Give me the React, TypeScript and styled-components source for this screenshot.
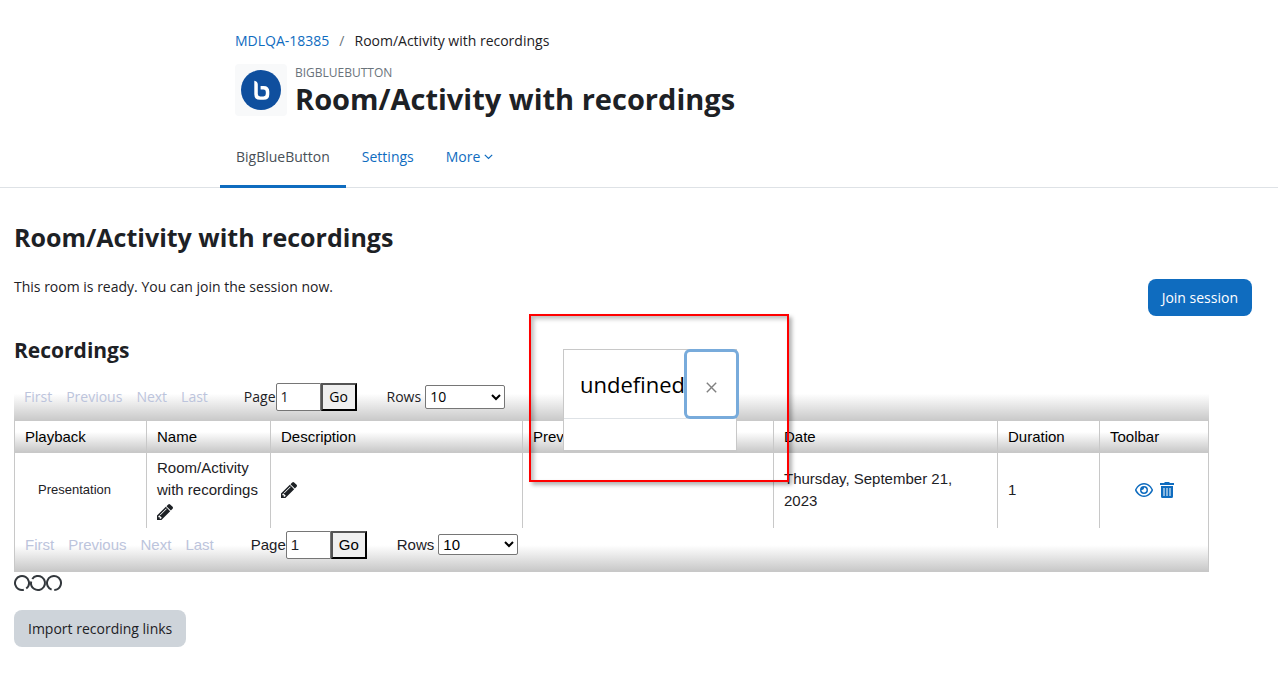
import React from 'react';
import styled, { createGlobalStyle, css } from 'styled-components';
import { FaRegEye } from 'react-icons/fa6';

const GlobalStyle = createGlobalStyle`
  * { box-sizing: border-box; }
  body {
    margin: 0;
    background: #fff;
    color: #1d2125;
    font: 14px/22px "Open Sans", "Noto Sans", sans-serif;
  }
  a { color: #0f6cbf; text-decoration: none; }
  h1, h2, h3, p { margin: 0; }
`;

const PageHeader = styled.header`
  border-bottom: 1px solid #dee2e6;
`;

const HeaderInner = styled.div`
  max-width: 838px;
  margin: 0 auto;
  padding-top: 30px;
`;

const Breadcrumb = styled.nav`
  display: flex;
  gap: 10px;
  padding: 0 15px;
  span { color: #6a737b; }
`;

const TitleRow = styled.div`
  display: flex;
  gap: 8px;
  padding: 12px 15px 0;
`;

const ActivityIcon = styled.div`
  display: flex;
  align-items: center;
  justify-content: center;
  width: 52px;
  height: 52px;
  border-radius: 4px;
  background: #f8f9fa;
`;

const ActivityType = styled.div`
  color: #6a737b;
  font-size: 12px;
  line-height: 18px;
  text-transform: uppercase;
`;

const PageTitle = styled.h1`
  font-size: 29px;
  line-height: 34px;
`;

const Tabs = styled.nav`
  display: flex;
  margin: 12px 0 -1px;
`;

const Tab = styled.a<{ $active?: boolean }>`
  display: flex;
  align-items: center;
  gap: 4px;
  height: 60px;
  padding: 0 16px;
  border-bottom: 3px solid transparent;
  ${(p) => p.$active && css`
    color: #495057;
    border-color: #0f6cbf;
  `}
`;

const Main = styled.main`
  padding: 31px 26px 36px 14px;
`;

const SectionTitle = styled.h2`
  font-size: 25px;
  line-height: 36px;
`;

const StatusRow = styled.div`
  display: flex;
  justify-content: space-between;
  align-items: flex-start;
  margin-top: 24px;
`;

const Status = styled.p`
  line-height: 16px;
`;

const Button = styled.button<{ $primary?: boolean }>`
  height: 37px;
  padding: 0 14px;
  border: 0;
  border-radius: 8px;
  font: inherit;
  color: ${(p) => (p.$primary ? '#fff' : '#1d2125')};
  background: ${(p) => (p.$primary ? '#0f6cbf' : '#ced4da')};
`;

const Recordings = styled.section`
  position: relative;
  margin: 20px 43px 0 0;
`;

const RecordingsTitle = styled.h3`
  margin-bottom: 18px;
  font-size: 21px;
  line-height: 28px;
`;

const Paginator = styled.div<{ $bottom?: boolean }>`
  display: flex;
  align-items: center;
  height: ${(p) => (p.$bottom ? '44px' : '39px')};
  padding: 0 10px 10px;
  background: linear-gradient(#fff ${(p) => (p.$bottom ? '40%' : '30%')}, #c8c8c8);
  ${(p) => p.$bottom && css`
    border: solid #c8c8c8;
    border-width: 0 1px 1px;
    font-family: "Liberation Sans", Arial, sans-serif;
    font-size: 15px;
  `}
`;

const PageLinks = styled.div<{ $wide?: boolean }>`
  display: flex;
  gap: 14px;
  margin-right: ${(p) => (p.$wide ? '37px' : '36px')};
  color: #bcc4dc;
`;

const PageInput = styled.input`
  width: 45px;
  height: 28px;
  padding: 0 4px;
  border: 1px solid #767676;
  border-radius: 2px 0 0 2px;
  font: inherit;
  color: #1d2125;
`;

const GoButton = styled.button`
  width: 36px;
  height: 28px;
  padding: 0;
  margin-right: 30px;
  border: 2px outset #000;
  background: #efefef;
  color: #000;
  font: inherit;
`;

const RowsSelect = styled.select<{ $short?: boolean }>`
  width: 80px;
  height: ${(p) => (p.$short ? '21px' : '24px')};
  margin-left: 4px;
  border: 1px solid #767676;
  border-radius: 2px;
  background: #fff;
  color: #000;
  font: inherit;
`;

const Table = styled.table`
  width: 100%;
  table-layout: fixed;
  border-collapse: separate;
  border-spacing: 0;
  border-left: 1px solid #c8c8c8;
  font: 15px/22px "Liberation Sans", Arial, sans-serif;
`;

const HeadCell = styled.th`
  height: 32px;
  padding: 0 10px;
  border-right: 1px solid #c8c8c8;
  border-bottom: 1px solid #c8c8c8;
  background: linear-gradient(#fff 35%, #c8c8c8);
  color: #000;
  font-weight: 400;
  text-align: left;
`;

const Cell = styled.td`
  height: 75px;
  padding: 3px 10px 5px;
  border-right: 1px solid #c8c8c8;
`;

const Playback = styled.a`
  padding: 0 13px;
  color: #1d2125;
  font-size: 13px;
`;

const IconButton = styled.button<{ $accent?: boolean }>`
  display: inline-flex;
  padding: 0;
  border: 0;
  background: none;
  vertical-align: -3px;
  color: ${(p) => (p.$accent ? '#0f6cbf' : '#1d2125')};
`;

const Tools = styled.div`
  display: flex;
  justify-content: center;
  align-items: center;
  gap: 7px;
`;

const Loader = styled.svg`
  display: block;
  margin: 2px 0 18px;
`;

const Highlight = styled.div`
  position: absolute;
  top: -22px;
  left: 515px;
  width: 260px;
  height: 168px;
  padding: 33px 0 0 32px;
  border: 2px solid #f00;
  box-shadow: 3px 3px 4px rgba(0, 0, 0, 0.3), inset 3px 3px 4px rgba(0, 0, 0, 0.25);
`;

const Dialog = styled.div`
  width: 174px;
  height: 103px;
  border: 1px solid #c8c8c8;
  border-bottom-width: 2px;
  background: #fff;
`;

const DialogHeader = styled.div`
  display: flex;
  align-items: center;
  height: 69px;
  padding-left: 16px;
  border-bottom: 1px solid #dee2e6;
`;

const DialogTitle = styled.div`
  width: 107px;
  color: #000;
  font-size: 22px;
  line-height: 34px;
`;

const CloseButton = styled.button`
  display: flex;
  flex: none;
  align-items: center;
  justify-content: center;
  width: 49px;
  height: 64px;
  padding: 6px 0 0;
  border: 0;
  border-radius: 3px;
  background: #fff;
  color: #808080;
  box-shadow: 0 0 0 3px #78abdb;
`;

const columns = [
  { label: 'Playback', width: 132 },
  { label: 'Name', width: 124 },
  { label: 'Description', width: 252 },
  { label: 'Preview', width: undefined },
  { label: 'Date', width: 224 },
  { label: 'Duration', width: 102 },
  { label: 'Toolbar', width: 109 },
];

function PaginatorBar({ bottom }: { bottom?: boolean }) {
  const id = bottom ? 'bottom' : 'top';
  return (
    <Paginator $bottom={bottom}>
      <PageLinks $wide={bottom}>
        <span>First</span>
        <span>Previous</span>
        <span>Next</span>
        <span>Last</span>
      </PageLinks>
      <label htmlFor={`page-${id}`}>Page</label>
      <PageInput id={`page-${id}`} type="text" defaultValue="1" />
      <GoButton type="button">Go</GoButton>
      <label htmlFor={`rows-${id}`}>Rows</label>
      <RowsSelect id={`rows-${id}`} $short={bottom} defaultValue="10">
        <option>10</option>
        <option>25</option>
        <option>100</option>
      </RowsSelect>
    </Paginator>
  );
}

function EditButton({ label }: { label: string }) {
  return (
    <IconButton type="button" aria-label={label}>
      <svg width="16" height="16" viewBox="0 149 1515 1515" fill="currentColor" fillRule="evenodd" aria-hidden="true">
        <path d="M363 1536l91-91-235-235-91 91v107h128v128h107zM900 590q-20-30-60 0l-550 550q-20 30 0 50 30 20 55 0l550-550q20-25 5-50zM832 416l416 416-832 832h-416v-416zM1515 512q0 53-37 90l-166 166-416-416 166-165q36-38 90-38 53 0 91 38l235 234q37 39 37 91z" />
      </svg>
    </IconButton>
  );
}

function TrashIcon() {
  return (
    <svg width="14" height="16" viewBox="0 0 14 16" fill="currentColor" fillRule="evenodd" aria-hidden="true">
      <path d="M0 1H4L5 0H9L10 1H14V3H0Z" />
      <path d="M1 4H13V14.5Q13 16 11.5 16H2.5Q1 16 1 14.5ZM3.5 6V14H4.5V6ZM6.5 6V14H7.5V6ZM9.5 6V14H10.5V6Z" />
    </svg>
  );
}

export default function App() {
  return (
    <>
      <GlobalStyle />
      <PageHeader>
        <HeaderInner>
          <Breadcrumb aria-label="Breadcrumb">
            <a href="#course">MDLQA-18385</a>
            <span>/</span>
            <div>Room/Activity with recordings</div>
          </Breadcrumb>
          <TitleRow>
            <ActivityIcon>
              <svg width="40" height="40" viewBox="0 0 40 40" aria-hidden="true">
                <circle cx="20" cy="20" r="20" fill="#0f4f9e" />
                <path d="M13.3 10.7Q16.8 11.4 16.8 14.5V24Q16.8 26.4 19.2 26.4H22.4Q24.8 26.4 24.8 24V21.8Q24.8 19.4 22.4 19.4H19.6V16H22.6Q28.3 16 28.3 21.6V24.2Q28.3 29.8 22.6 29.8H19Q13.3 29.8 13.3 24.2Z" fill="#fff" />
              </svg>
            </ActivityIcon>
            <div>
              <ActivityType>BigBlueButton</ActivityType>
              <PageTitle>Room/Activity with recordings</PageTitle>
            </div>
          </TitleRow>
          <Tabs aria-label="Activity">
            <Tab href="#activity" $active>BigBlueButton</Tab>
            <Tab href="#settings">Settings</Tab>
            <Tab href="#more">
              More
              <svg width="9" height="6" viewBox="0 0 9 6" fill="none" stroke="currentColor" aria-hidden="true">
                <path d="M0.8 0.8L4.5 4.5L8.2 0.8" strokeWidth="1.2" />
              </svg>
            </Tab>
          </Tabs>
        </HeaderInner>
      </PageHeader>
      <Main>
        <SectionTitle>Room/Activity with recordings</SectionTitle>
        <StatusRow>
          <Status>This room is ready. You can join the session now.</Status>
          <Button type="button" $primary>Join session</Button>
        </StatusRow>
        <Recordings>
          <RecordingsTitle>Recordings</RecordingsTitle>
          <PaginatorBar />
          <Table>
            <colgroup>
              {columns.map((c) => <col key={c.label} width={c.width} />)}
            </colgroup>
            <thead>
              <tr>{columns.map((c) => <HeadCell key={c.label}>{c.label}</HeadCell>)}</tr>
            </thead>
            <tbody>
              <tr>
                <Cell><Playback href="#presentation">Presentation</Playback></Cell>
                <Cell>Room/Activity with recordings <EditButton label="Edit name" /></Cell>
                <Cell><EditButton label="Edit description" /></Cell>
                <Cell />
                <Cell>Thursday, September 21, 2023</Cell>
                <Cell>1</Cell>
                <Cell>
                  <Tools>
                    <IconButton type="button" $accent aria-label="Hide"><FaRegEye size={18} /></IconButton>
                    <IconButton type="button" $accent aria-label="Delete"><TrashIcon /></IconButton>
                  </Tools>
                </Cell>
              </tr>
            </tbody>
          </Table>
          <PaginatorBar bottom />
          <Highlight>
            <Dialog role="dialog" aria-label="undefined">
              <DialogHeader>
                <DialogTitle>undefined</DialogTitle>
                <CloseButton type="button" aria-label="Close">
                  <svg width="11" height="11" viewBox="0 0 11 11" stroke="currentColor" strokeWidth="1.4" aria-hidden="true">
                    <path d="M0.8 0.8L10.2 10.2M10.2 0.8L0.8 10.2" />
                  </svg>
                </CloseButton>
              </DialogHeader>
            </Dialog>
          </Highlight>
        </Recordings>
        <Loader width="48" height="18" viewBox="0 0 48 18" fill="none" stroke="#33383d" strokeWidth="2" role="img" aria-label="Loading">
          <circle cx="8" cy="9" r="7" strokeDasharray="41 3" transform="rotate(75 8 9)" />
          <circle cx="24" cy="9" r="7" strokeDasharray="41 3" transform="rotate(215 24 9)" />
          <circle cx="40" cy="9" r="7" strokeDasharray="41 3" transform="rotate(110 40 9)" />
        </Loader>
        <Button type="button">Import recording links</Button>
      </Main>
    </>
  );
}
